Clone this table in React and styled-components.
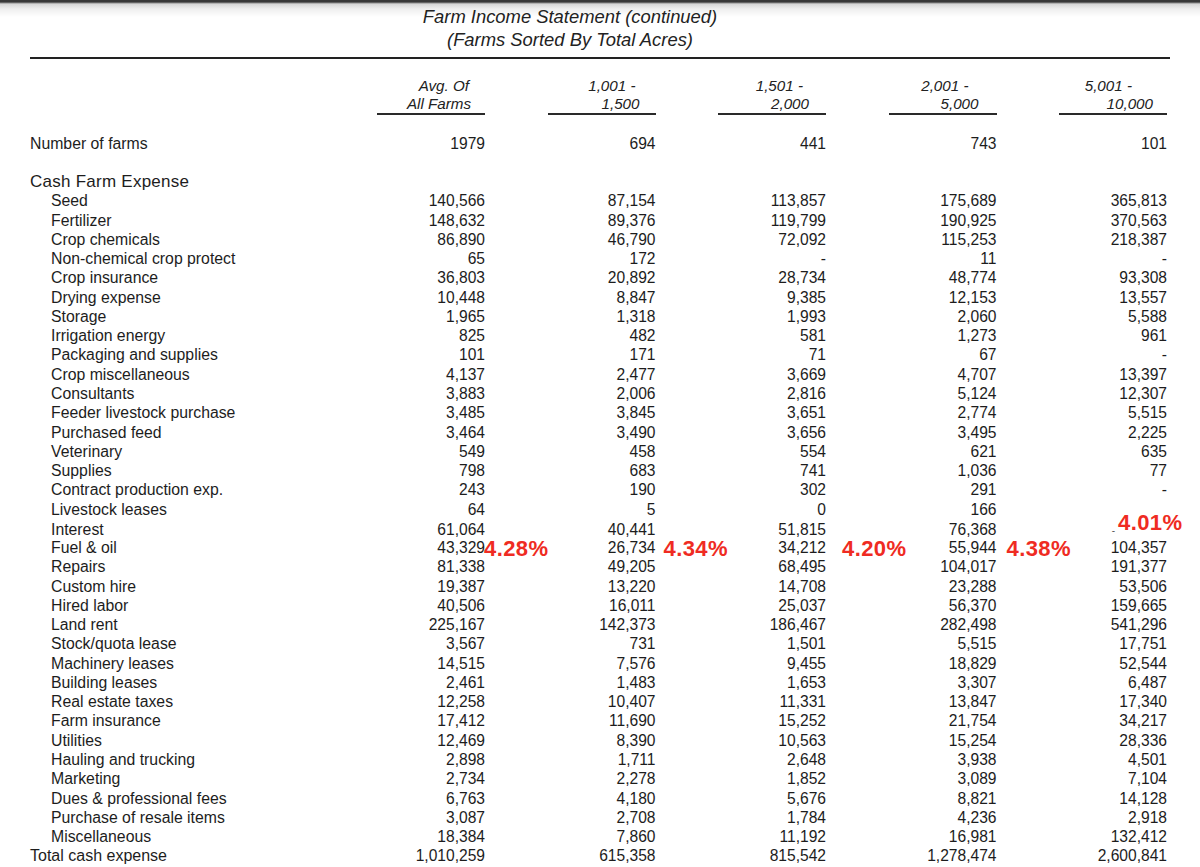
import React from "react";
import styled, { createGlobalStyle } from "styled-components";

const GlobalStyle = createGlobalStyle`
  html, body { margin: 0; padding: 0; background: #fff; }
  body {
    font-family: "Liberation Sans", Arial, sans-serif;
    color: #1d1d1d;
    overflow: hidden;
  }
`;

const COLS = "284.5px repeat(5, 170.5px)";

const Page = styled.div`
  width: 1200px;
  min-height: 867px;
  box-sizing: border-box;
  padding: 5px 30px 0 30px;
  background: linear-gradient(
    to bottom,
    #393939 0px,
    #393939 2px,
    #8d8d8d 3px,
    #d6d6d6 4px,
    #efefef 9px,
    #ffffff 17px
  );
`;

const Title = styled.div`
  padding-right: 60px;
  text-align: center;
  font-style: italic;
  font-size: 18.4px;
  line-height: 23px;
  color: #222;
`;

const TitleLine = styled.div``;

const Rule = styled.div`
  margin-top: 6px;
  height: 2px;
  background: #222;
`;

const HeaderGrid = styled.div`
  display: grid;
  grid-template-columns: ${COLS};
  margin-top: 18px;
`;

const HeadCell = styled.div`
  display: flex;
  justify-content: flex-end;
`;

const HeadBox = styled.div`
  width: 108px;
  border-bottom: 2px solid #2a2a2a;
`;

const HeadLine = styled.div`
  text-align: right;
  padding-right: ${(p) => p.$pad}px;
  font-style: italic;
  font-size: 15.2px;
  line-height: 18px;
  color: #222;
`;

const Table = styled.div`
  margin-top: 18.4px;
`;

const Row = styled.div`
  display: grid;
  grid-template-columns: ${COLS};
  height: 19.27px;
  align-items: center;
`;

const Label = styled.div`
  padding-left: ${(p) => p.$indent}px;
  font-size: ${(p) => p.$size}px;
  letter-spacing: ${(p) => p.$spacing || 0}px;
  line-height: 19px;
  white-space: nowrap;
`;

const Num = styled.div`
  position: relative;
  text-align: right;
  font-size: 15.6px;
  line-height: 19px;
  white-space: nowrap;
`;

/* the sliver of a number left visible beside a pasted-over note */
const Stub = styled.span`
  display: inline-block;
  font-size: 10px;
  margin-right: 52px;
  color: #555;
`;

const Annot = styled.span`
  position: absolute;
  left: calc(100% + ${(p) => p.$dx}px);
  top: calc(50% + ${(p) => p.$dy}px);
  transform: translateY(-50%);
  color: #ef2b22;
  font-weight: bold;
  font-size: 22px;
  line-height: 22px;
  letter-spacing: 0.4px;
  white-space: nowrap;
`;

const headers = [
  { top: "Avg. Of", bottom: "All Farms", pad: 16, padB: 14 },
  { top: "1,001 -", bottom: "1,500", pad: 20, padB: 16 },
  { top: "1,501 -", bottom: "2,000", pad: 23, padB: 17 },
  { top: "2,001 -", bottom: "5,000", pad: 28, padB: 18 },
  { top: "5,001 -", bottom: "10,000", pad: 35, padB: 14 },
];

const items = [
  ["Seed", "140,566", "87,154", "113,857", "175,689", "365,813"],
  ["Fertilizer", "148,632", "89,376", "119,799", "190,925", "370,563"],
  ["Crop chemicals", "86,890", "46,790", "72,092", "115,253", "218,387"],
  ["Non-chemical crop protect", "65", "172", "-", "11", "-"],
  ["Crop insurance", "36,803", "20,892", "28,734", "48,774", "93,308"],
  ["Drying expense", "10,448", "8,847", "9,385", "12,153", "13,557"],
  ["Storage", "1,965", "1,318", "1,993", "2,060", "5,588"],
  ["Irrigation energy", "825", "482", "581", "1,273", "961"],
  ["Packaging and supplies", "101", "171", "71", "67", "-"],
  ["Crop miscellaneous", "4,137", "2,477", "3,669", "4,707", "13,397"],
  ["Consultants", "3,883", "2,006", "2,816", "5,124", "12,307"],
  ["Feeder livestock purchase", "3,485", "3,845", "3,651", "2,774", "5,515"],
  ["Purchased feed", "3,464", "3,490", "3,656", "3,495", "2,225"],
  ["Veterinary", "549", "458", "554", "621", "635"],
  ["Supplies", "798", "683", "741", "1,036", "77"],
  ["Contract production exp.", "243", "190", "302", "291", "-"],
  ["Livestock leases", "64", "5", "0", "166", ""],
  ["Interest", "61,064", "40,441", "51,815", "76,368", null],
  ["Fuel & oil", "43,329", "26,734", "34,212", "55,944", "104,357"],
  ["Repairs", "81,338", "49,205", "68,495", "104,017", "191,377"],
  ["Custom hire", "19,387", "13,220", "14,708", "23,288", "53,506"],
  ["Hired labor", "40,506", "16,011", "25,037", "56,370", "159,665"],
  ["Land rent", "225,167", "142,373", "186,467", "282,498", "541,296"],
  ["Stock/quota lease", "3,567", "731", "1,501", "5,515", "17,751"],
  ["Machinery leases", "14,515", "7,576", "9,455", "18,829", "52,544"],
  ["Building leases", "2,461", "1,483", "1,653", "3,307", "6,487"],
  ["Real estate taxes", "12,258", "10,407", "11,331", "13,847", "17,340"],
  ["Farm insurance", "17,412", "11,690", "15,252", "21,754", "34,217"],
  ["Utilities", "12,469", "8,390", "10,563", "15,254", "28,336"],
  ["Hauling and trucking", "2,898", "1,711", "2,648", "3,938", "4,501"],
  ["Marketing", "2,734", "2,278", "1,852", "3,089", "7,104"],
  ["Dues & professional fees", "6,763", "4,180", "5,676", "8,821", "14,128"],
  ["Purchase of resale items", "3,087", "2,708", "1,784", "4,236", "2,918"],
  ["Miscellaneous", "18,384", "7,860", "11,192", "16,981", "132,412"],
];

/* red percentage notes: [row label, column index, text, dx, dy] */
const notes = [
  ["Fuel & oil", 0, "4.28%", -1, 1],
  ["Fuel & oil", 1, "4.34%", 8, 1],
  ["Fuel & oil", 2, "4.20%", 16, 1],
  ["Fuel & oil", 3, "4.38%", 10, 1],
  ["Interest", 4, "4.01%", -49, -6],
];

function noteFor(label, col) {
  const n = notes.find((x) => x[0] === label && x[1] === col);
  if (!n) return null;
  return (
    <Annot $dx={n[3]} $dy={n[4]}>
      {n[2]}
    </Annot>
  );
}

function DataRow({ label, values, indent = 21, size = 15.8, spacing }) {
  return (
    <Row>
      <Label $indent={indent} $size={size} $spacing={spacing}>
        {label}
      </Label>
      {values.map((v, i) => (
        <Num key={i}>
          {v === null ? <Stub>-</Stub> : v}
          {noteFor(label, i)}
        </Num>
      ))}
    </Row>
  );
}

export default function App() {
  return (
    <>
      <GlobalStyle />
      <Page>
        <Title>
          <TitleLine>Farm Income Statement (continued)</TitleLine>
          <TitleLine>(Farms Sorted By Total Acres)</TitleLine>
        </Title>
        <Rule />
        <HeaderGrid>
          <div />
          {headers.map((h) => (
            <HeadCell key={h.bottom}>
              <HeadBox>
                <HeadLine $pad={h.pad}>{h.top}</HeadLine>
                <HeadLine $pad={h.padB}>{h.bottom}</HeadLine>
              </HeadBox>
            </HeadCell>
          ))}
        </HeaderGrid>
        <Table>
          <DataRow
            label="Number of farms"
            indent={0}
            values={["1979", "694", "441", "743", "101"]}
          />
          <Row />
          <Row>
            <Label $indent={0} $size={17} $spacing={0.25}>
              Cash Farm Expense
            </Label>
          </Row>
          {items.map((r) => (
            <DataRow key={r[0]} label={r[0]} values={r.slice(1)} />
          ))}
          <DataRow
            label="Total cash expense"
            indent={0}
            size={16}
            values={["1,010,259", "615,358", "815,542", "1,278,474", "2,600,841"]}
          />
        </Table>
      </Page>
    </>
  );
}
